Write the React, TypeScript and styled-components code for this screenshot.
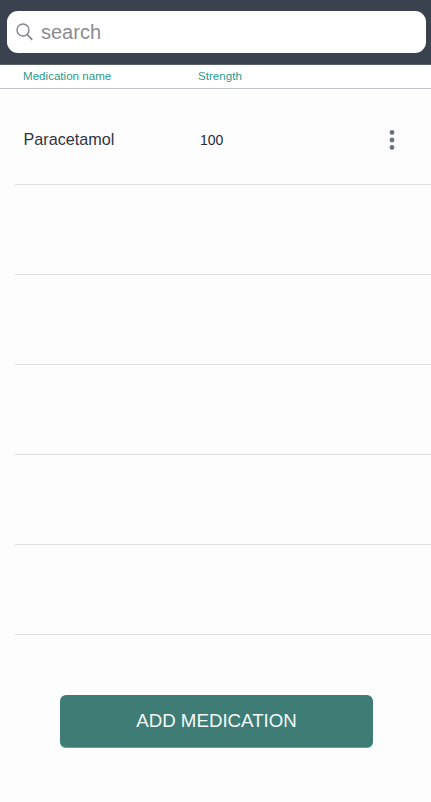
import styled, { createGlobalStyle } from "styled-components";

const GlobalStyle = createGlobalStyle`
  html, body {
    margin: 0;
    padding: 0;
    background: #fefdfe;
    font-family: "Liberation Sans", Arial, sans-serif;
  }
`;

const Page = styled.div`
  width: 431px;
  height: 802px;
  display: flex;
  flex-direction: column;
  overflow: hidden;
  background: #fefdfe;
`;

const SearchBar = styled.div`
  height: 65px;
  box-sizing: border-box;
  padding: 11px 5px 0 7px;
  background: #3b424f;
  border-bottom: 1px solid #5c626c;
`;

const SearchBox = styled.div`
  height: 42px;
  display: flex;
  align-items: center;
  gap: 8px;
  padding-left: 9px;
  background: #ffffff;
  border-radius: 11px;
`;

const SearchText = styled.span`
  font-size: 20px;
  color: #8c8a93;
`;

const TableHead = styled.div`
  height: 24px;
  box-sizing: border-box;
  display: flex;
  align-items: center;
  padding: 0 0 2px 23px;
  background: #ffffff;
  border-bottom: 1px solid #c3c4ca;
`;

const HeadCell = styled.span<{ $width?: number }>`
  width: ${(p) => (p.$width ? `${p.$width}px` : "auto")};
  font-size: 11.6px;
  color: #2c9a8d;
`;

const Rows = styled.div`
  margin-left: 15px;
`;

const Row = styled.div`
  height: 90px;
  box-sizing: border-box;
  display: flex;
  align-items: center;
  padding: 14px 0 0 8.5px;
  border-bottom: 1px solid #dfe0e2;
  &:first-child {
    height: 96px;
    padding-top: 6px;
  }
`;

const MedName = styled.span`
  width: 176.5px;
  font-size: 16.2px;
  color: #2d3442;
`;

const MedStrength = styled.span`
  flex: 1;
  font-size: 14px;
  color: #222a38;
`;

const MoreButton = styled.button`
  width: 8px;
  height: 22px;
  margin-right: 35px;
  padding: 0;
  border: 0;
  background: none;
  display: flex;
`;

const Footer = styled.div`
  flex: 1;
  display: flex;
  justify-content: center;
  padding: 60px 0 0 2px;
`;

const AddButton = styled.button`
  width: 313px;
  height: 53px;
  box-sizing: border-box;
  border: 0;
  border-bottom: 1px solid #4fa9a1;
  border-radius: 6px;
  background: #3e7c75;
  color: #f2faf8;
  font-family: inherit;
  font-size: 18.7px;
`;

const rows = [
  { name: "Paracetamol", strength: "100" },
  null,
  null,
  null,
  null,
  null,
];

export default function App() {
  return (
    <Page>
      <GlobalStyle />
      <SearchBar>
        <SearchBox>
          <svg width="17" height="18" viewBox="0 0 17 18" fill="none" stroke="#85848c">
            <circle cx="7" cy="7" r="6" strokeWidth="1.4" />
            <path d="M11.3 11.5 L16.2 16.8" strokeWidth="1.8" />
          </svg>
          <SearchText>search</SearchText>
        </SearchBox>
      </SearchBar>
      <TableHead>
        <HeadCell $width={175}>Medication name</HeadCell>
        <HeadCell>Strength</HeadCell>
      </TableHead>
      <Rows>
        {rows.map((row, i) => (
          <Row key={i}>
            {row && (
              <>
                <MedName>{row.name}</MedName>
                <MedStrength>{row.strength}</MedStrength>
                <MoreButton aria-label="more">
                  <svg width="8" height="22" viewBox="0 0 8 22" fill="#6b7280">
                    <circle cx="4" cy="3.5" r="2.4" />
                    <circle cx="4" cy="11" r="2.4" />
                    <circle cx="4" cy="18.5" r="2.4" />
                  </svg>
                </MoreButton>
              </>
            )}
          </Row>
        ))}
      </Rows>
      <Footer>
        <AddButton>ADD MEDICATION</AddButton>
      </Footer>
    </Page>
  );
}
